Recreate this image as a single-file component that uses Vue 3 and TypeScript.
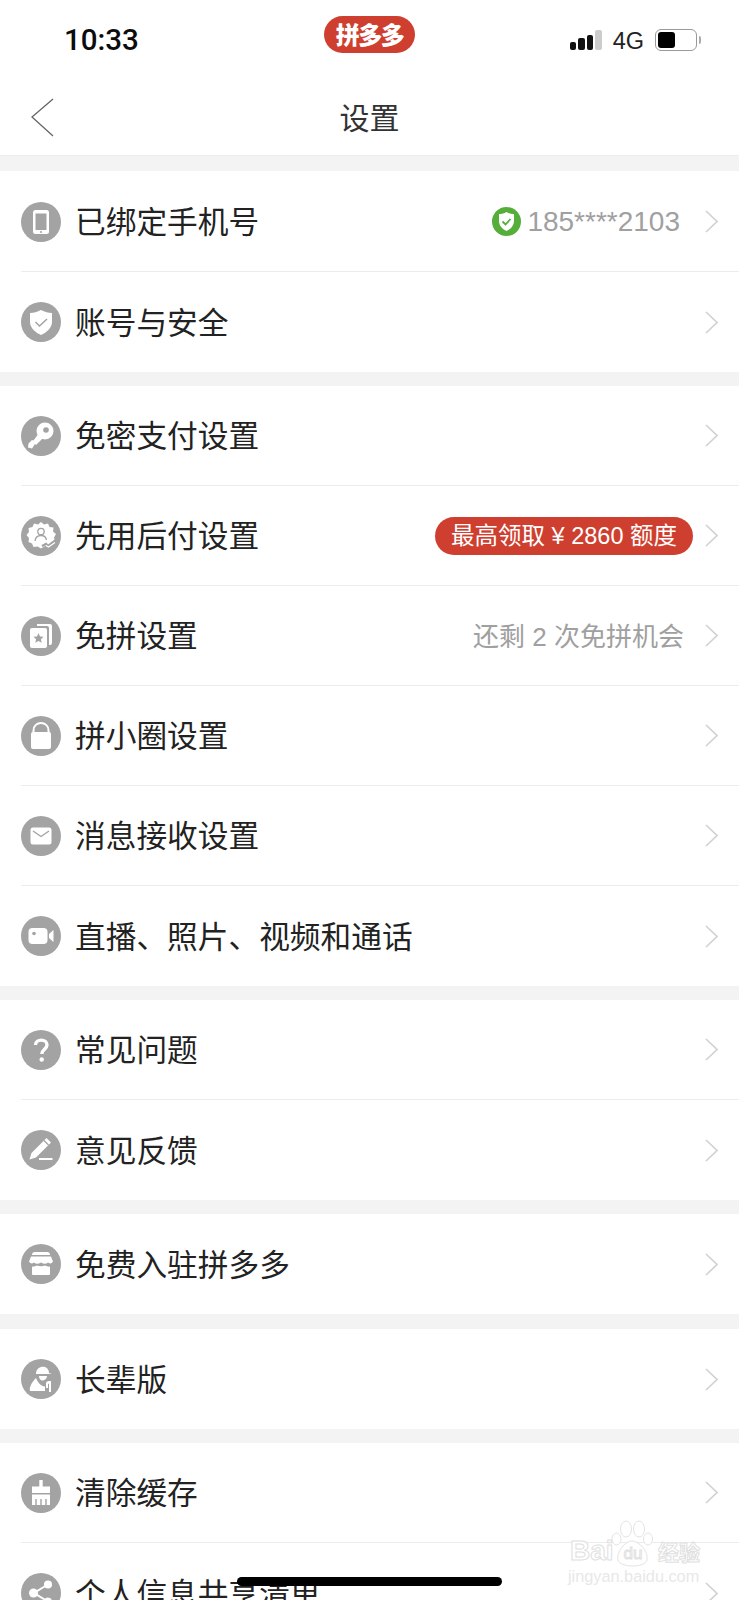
<script setup lang="ts">
interface Row {
  label: string
  icon: string
  value?: string
  kind?: 'phone' | 'badge'
}

const groups: Row[][] = [
  [
    { label: '已绑定手机号', icon: 'phone', value: '185****2103', kind: 'phone' },
    { label: '账号与安全', icon: 'shield' },
  ],
  [
    { label: '免密支付设置', icon: 'key' },
    { label: '先用后付设置', icon: 'gear', value: '最高领取 ¥ 2860 额度', kind: 'badge' },
    { label: '免拼设置', icon: 'cards', value: '还剩 2 次免拼机会' },
    { label: '拼小圈设置', icon: 'lock' },
    { label: '消息接收设置', icon: 'mail' },
    { label: '直播、照片、视频和通话', icon: 'video' },
  ],
  [
    { label: '常见问题', icon: 'help' },
    { label: '意见反馈', icon: 'pen' },
  ],
  [{ label: '免费入驻拼多多', icon: 'shop' }],
  [{ label: '长辈版', icon: 'elder' }],
  [
    { label: '清除缓存', icon: 'broom' },
    { label: '个人信息共享清单', icon: 'share' },
  ],
]
</script>

<template>
  <div class="page">
    <div class="status">
      <span class="time">10:33</span>
      <span class="app-pill">拼多多</span>
      <div class="status-right">
        <span class="signal"><i></i><i></i><i></i><i class="off"></i></span>
        <span class="net">4G</span>
        <span class="battery"><span class="level"></span></span>
        <span class="cap"></span>
      </div>
    </div>

    <header class="nav">
      <svg class="back" width="24" height="40" viewBox="0 0 24 40">
        <path d="M23 1 L2 19 L23 38" fill="none" stroke="#666" stroke-width="1.3" />
      </svg>
      <span class="title">设置</span>
    </header>

    <section v-for="(group, gi) in groups" :key="gi" class="group">
      <div v-for="row in group" :key="row.label" class="row">
        <span class="icon">
          <svg width="40" height="40" viewBox="0 0 40 40">
            <circle cx="20" cy="20" r="20" fill="#a3a3a3" />
            <g v-if="row.icon === 'phone'">
              <rect x="12" y="8" width="16" height="24" rx="2.5" fill="#fff" />
              <rect x="14.5" y="11.5" width="11" height="16.5" fill="#a3a3a3" />
              <circle cx="20" cy="30" r="1" fill="#a3a3a3" />
            </g>
            <g v-else-if="row.icon === 'shield'">
              <path d="M20 8 C24 10 27 11 31 11 V20 C31 26 25 31 20 33 C15 31 9 26 9 20 V11 C13 11 16 10 20 8 Z" fill="#fff" />
              <path d="M14.5 20 L18.5 24 L26 17" fill="none" stroke="#a3a3a3" stroke-width="1.5" />
            </g>
            <g v-else-if="row.icon === 'key'">
              <circle cx="24" cy="15" r="8.5" fill="#fff" />
              <circle cx="25" cy="14" r="2.8" fill="#a3a3a3" />
              <path d="M18 17 L22.5 21.5 L15 29 L14 28 L11 32.5 L7 31.5 L7.5 27.5 L11 24 L12.5 24.5 Z" fill="#fff" />
            </g>
            <g v-else-if="row.icon === 'gear'">
              <path d="M20 6 L23 8.5 L27 7.5 L28.5 11 L32.5 11.5 L32 15.5 L35 18 L33 21.5 L34 25 L30 27 L27.5 30.5 L24 30 L20 32.5 L16.5 30.5 L12.5 31 L11 27.5 L7.5 26 L8 22 L5.5 19 L8 16 L7.5 12 L11.5 11 L13 7.5 L17 8.5 Z" fill="#fff" />
              <circle cx="20" cy="15.5" r="3.2" fill="none" stroke="#a3a3a3" stroke-width="1.3" />
              <path d="M14 25 C14.5 21 17 19.5 20 19.5 C23 19.5 25 21 25.5 24" fill="none" stroke="#a3a3a3" stroke-width="1.3" />
              <path d="M21 30 L25 28 L27 30 L35 24" fill="none" stroke="#a3a3a3" stroke-width="2.4" />
              <path d="M25 29.5 L27.5 31 L34 26.5" fill="none" stroke="#fff" stroke-width="1.2" />
            </g>
            <g v-else-if="row.icon === 'cards'">
              <path d="M16 8 H29 Q31 8 31 10 V27 Q31 29 29 29 H28 V12 Q28 10 26 10 H16 Z" fill="#fff" />
              <rect x="9" y="12" width="17" height="20" rx="2" fill="#fff" />
              <path d="M17.5 17 L19 20.5 L22.6 20.8 L19.9 23.2 L20.7 26.8 L17.5 25 L14.3 26.8 L15.1 23.2 L12.4 20.8 L16 20.5 Z" fill="#a3a3a3" />
            </g>
            <g v-else-if="row.icon === 'lock'">
              <path d="M12.5 17 V14.5 C12.5 4.5 27.5 4.5 27.5 14.5 V17" fill="none" stroke="#fff" stroke-width="2" />
              <rect x="10" y="16" width="20" height="17" rx="2" fill="#fff" />
            </g>
            <g v-else-if="row.icon === 'mail'">
              <rect x="9.5" y="11.5" width="21" height="17" rx="2.5" fill="#fff" />
              <path d="M12 15 L20 20.5 L28 15" fill="none" stroke="#a3a3a3" stroke-width="1.4" />
            </g>
            <g v-else-if="row.icon === 'video'">
              <rect x="7.5" y="12" width="19" height="16" rx="4" fill="#fff" />
              <circle cx="13" cy="17.5" r="1.8" fill="#a3a3a3" />
              <path d="M28 18 L32.5 14 V26 L28 22 Z" fill="#fff" />
            </g>
            <g v-else-if="row.icon === 'help'">
              <path d="M14.5 15 C14.5 8.5 26 8.5 26 15 C26 19 20.8 19.5 20.8 24" fill="none" stroke="#fff" stroke-width="3.4" />
              <circle cx="20.7" cy="29.5" r="2.2" fill="#fff" />
            </g>
            <g v-else-if="row.icon === 'pen'">
              <path d="M25.5 8 L30 12.5 L15 27.5 L8.5 29.5 L10.5 23 Z" fill="#fff" />
              <path d="M23 10.5 L27.5 15" stroke="#a3a3a3" stroke-width="1.2" />
              <rect x="18" y="28" width="13.5" height="2" fill="#fff" />
            </g>
            <g v-else-if="row.icon === 'shop'">
              <path d="M11 11 Q11 8 14 8 H26 Q29 8 29 11 Z" fill="#fff" />
              <path d="M10 12.5 H30 L32 17.5 Q30 21 27 18.5 Q24 21 20 18.5 Q16 21 13 18.5 Q10 21 8 17.5 Z" fill="#fff" />
              <path d="M11 22.5 Q13 23 16 21.5 Q20 23 24 21.5 Q27 23 29 22.5 V30 Q29 31 28 31 H12 Q11 31 11 30 Z" fill="#fff" />
            </g>
            <g v-else-if="row.icon === 'elder'">
              <path d="M15 15 C15 9 20 7 24 8 C27 9 28 12 28 14 L31 15 Z" fill="#fff" />
              <path d="M18 17 H26 C26 20 23 21.5 21.5 21.5 C20 21.5 18 20 18 17 Z" fill="#fff" />
              <path d="M15 19 C11 23 8 28 9 32 H24 V27.5 C20 27 17 24 15 19 Z" fill="#fff" />
              <path d="M25 25 C25 22 27 22 30 22 V33 H28 V25 C27 24.5 27 25 27 26 V29 H25 Z" fill="#fff" />
            </g>
            <g v-else-if="row.icon === 'broom'">
              <path d="M18.3 7 H21.7 V13.5 H29 V20 H11 V13.5 H18.3 Z" fill="#fff" />
              <path d="M11 21.5 H29 V32 H11 Z" fill="#fff" />
              <path d="M15 26 V32 M20 26 V32 M25 26 V32" stroke="#a3a3a3" stroke-width="1.4" />
            </g>
            <g v-else-if="row.icon === 'share'">
              <path d="M26 12 L13 20 L26 28" fill="none" stroke="#fff" stroke-width="2" />
              <circle cx="27" cy="11.5" r="4" fill="#fff" />
              <circle cx="12.5" cy="20" r="4.5" fill="#fff" />
              <circle cx="27" cy="28.5" r="4" fill="#fff" />
            </g>
          </svg>
        </span>
        <span class="label">{{ row.label }}</span>
        <span v-if="row.kind === 'phone'" class="verified">
          <svg width="29" height="29" viewBox="0 0 29 29">
            <circle cx="14.5" cy="14.5" r="14.5" fill="#55ae3a" />
            <path d="M14.5 5 C17 6.5 19 7 22 7 V14 C22 19 18 22.5 14.5 24 C11 22.5 7 19 7 14 V7 C10 7 12 6.5 14.5 5 Z" fill="#fff" />
            <path d="M10.5 14.5 L13.5 17.5 L18.5 12" fill="none" stroke="#55ae3a" stroke-width="1.8" />
          </svg>
          <span class="value num">{{ row.value }}</span>
        </span>
        <span v-else-if="row.kind === 'badge'" class="badge">{{ row.value }}</span>
        <span v-else-if="row.value" class="value plain">{{ row.value }}</span>
        <svg class="chevron" width="13" height="23" viewBox="0 0 13 23">
          <path d="M1 1 L12 11.5 L1 22" fill="none" stroke="#d2d2d2" stroke-width="1.7" />
        </svg>
      </div>
    </section>

    <div class="home-bar"></div>

    <div class="watermark">
      <svg class="paw" width="42" height="50" viewBox="0 0 42 50">
        <g fill="#fff" stroke="#e4e4e4" stroke-width="1">
          <ellipse cx="15" cy="9" rx="5.5" ry="8" />
          <ellipse cx="28" cy="9" rx="5.5" ry="8" />
          <ellipse cx="5.5" cy="19" rx="4.5" ry="6" />
          <ellipse cx="37" cy="19" rx="4.5" ry="6" />
          <path d="M21 21 C28 21 38 32 36 40 C34 48 9 48 7 40 C5 32 14 21 21 21 Z" />
        </g>
      </svg>
      <div class="wm-top">
        <span class="wm-bai">Bai</span>
        <span class="wm-du">du</span>
        <span class="wm-cn">经验</span>
      </div>
      <div class="wm-url">jingyan.baidu.com</div>
    </div>
  </div>
</template>

<style scoped>
.page {
  position: relative;
  width: 739px;
  height: 1600px;
  overflow: hidden;
  background: #f3f3f3;
  font-family: "Noto Sans CJK SC", "Liberation Sans", sans-serif;
  color: #222;
}
.status {
  height: 70px;
  background: #fff;
  display: flex;
  align-items: center;
  position: relative;
}
.time {
  margin-left: 64px;
  margin-top: 12px;
  font: 500 29.5px/1 Roboto, "Liberation Sans", sans-serif;
  color: #0c0c0c;
}
.app-pill {
  position: absolute;
  left: 324px;
  top: 16px;
  width: 91px;
  height: 37px;
  border-radius: 19px;
  background: #cf3f2f;
  color: #fff;
  font-size: 24px;
  font-weight: 900;
  line-height: 36px;
  text-align: center;
  letter-spacing: -1.5px;
}
.status-right {
  margin-left: auto;
  margin-right: 38px;
  margin-top: 10px;
  display: flex;
  align-items: center;
}
.signal {
  display: flex;
  align-items: flex-end;
  gap: 2px;
  height: 20px;
}
.signal i {
  width: 6.5px;
  border-radius: 2px;
  background: #111;
}
.signal i:nth-child(1) { height: 8px; }
.signal i:nth-child(2) { height: 12px; }
.signal i:nth-child(3) { height: 15px; }
.signal i:nth-child(4) { height: 20px; }
.signal i.off { background: #ccc; }
.net {
  margin-left: 11px;
  margin-top: 3px;
  font: 400 23.5px/1 "Liberation Sans", sans-serif;
  color: #222;
}
.battery {
  margin-left: 11px;
  width: 42px;
  height: 22px;
  box-sizing: border-box;
  border: 1.5px solid #999;
  border-radius: 6px;
  padding: 2px;
  display: flex;
}
.level {
  width: 17px;
  background: #000;
  border-radius: 3px;
}
.cap {
  width: 2px;
  height: 8px;
  margin-left: 2px;
  background: #aaa;
  border-radius: 0 2px 2px 0;
}
.nav {
  height: 86px;
  background: #fff;
  border-bottom: 1px solid #ececec;
  box-sizing: border-box;
  display: flex;
  align-items: center;
  justify-content: center;
  position: relative;
}
.back {
  position: absolute;
  left: 30px;
  top: 28px;
}
.title {
  font-size: 30px;
  line-height: 40px;
  margin-top: 6px;
  color: #333;
}
.group {
  margin-top: 14px;
  background: #fff;
}
.group:nth-of-type(1) {
  margin-top: 15px;
  padding-top: 1px;
}
.group:nth-of-type(5) {
  margin-top: 15px;
}
.row {
  height: 100px;
  margin-left: 21px;
  padding-right: 21px;
  box-sizing: border-box;
  display: flex;
  align-items: center;
  border-bottom: 1px solid #ececec;
}
.row:last-child {
  border-bottom: none;
}
.icon {
  width: 40px;
  height: 40px;
  flex-shrink: 0;
}
.icon svg {
  display: block;
}
.label {
  flex: 1;
  margin-left: 14px;
  padding-bottom: 3px;
  font-size: 30.7px;
  line-height: 40px;
  font-weight: 400;
  color: #222;
  white-space: nowrap;
}
.verified {
  display: flex;
  align-items: center;
  gap: 6px;
  margin-right: 25px;
}
.value {
  line-height: 36px;
  color: #a0a0a0;
}
.value.plain {
  margin-right: 21px;
  padding-top: 2px;
  font-family: "Liberation Sans", "Noto Sans CJK SC", sans-serif;
  font-size: 26px;
}
.value.num {
  font-family: "Liberation Sans", sans-serif;
  font-size: 28px;
}
.badge {
  height: 38px;
  padding: 0 16px;
  margin-right: 12px;
  border-radius: 19px;
  background: #cf3f2f;
  color: #fff;
  font-family: "Liberation Sans", "Noto Sans CJK SC", sans-serif;
  font-size: 23.5px;
  line-height: 38px;
  white-space: nowrap;
}
.home-bar {
  position: absolute;
  left: 237px;
  top: 1577px;
  width: 265px;
  height: 9px;
  border-radius: 5px;
  background: #000;
}
.watermark {
  position: absolute;
  left: 568px;
  top: 1520px;
  width: 134px;
  font-family: "Liberation Sans", sans-serif;
}
.paw {
  position: absolute;
  left: 43px;
  top: 0;
}
.wm-top {
  position: relative;
  margin-top: 18px;
  height: 26px;
  display: flex;
  align-items: center;
  color: #fff;
  -webkit-text-stroke: 1px #e0e0e0;
}
.wm-bai {
  width: 47px;
  margin-left: 2px;
  font-size: 28px;
  font-weight: 700;
}
.wm-du {
  width: 32px;
  margin-top: 6px;
  font-size: 17px;
  text-align: center;
}
.wm-cn {
  margin-left: 9px;
  font-family: "Noto Sans CJK SC", sans-serif;
  font-size: 21px;
  font-weight: 700;
  white-space: nowrap;
}
.wm-url {
  position: relative;
  font-size: 16.3px;
  line-height: 18px;
  margin-top: 3px;
  white-space: nowrap;
  color: #e8e8e8;
}
</style>

<style>
html, body {
  margin: 0;
  background: #f3f3f3;
}
</style>
